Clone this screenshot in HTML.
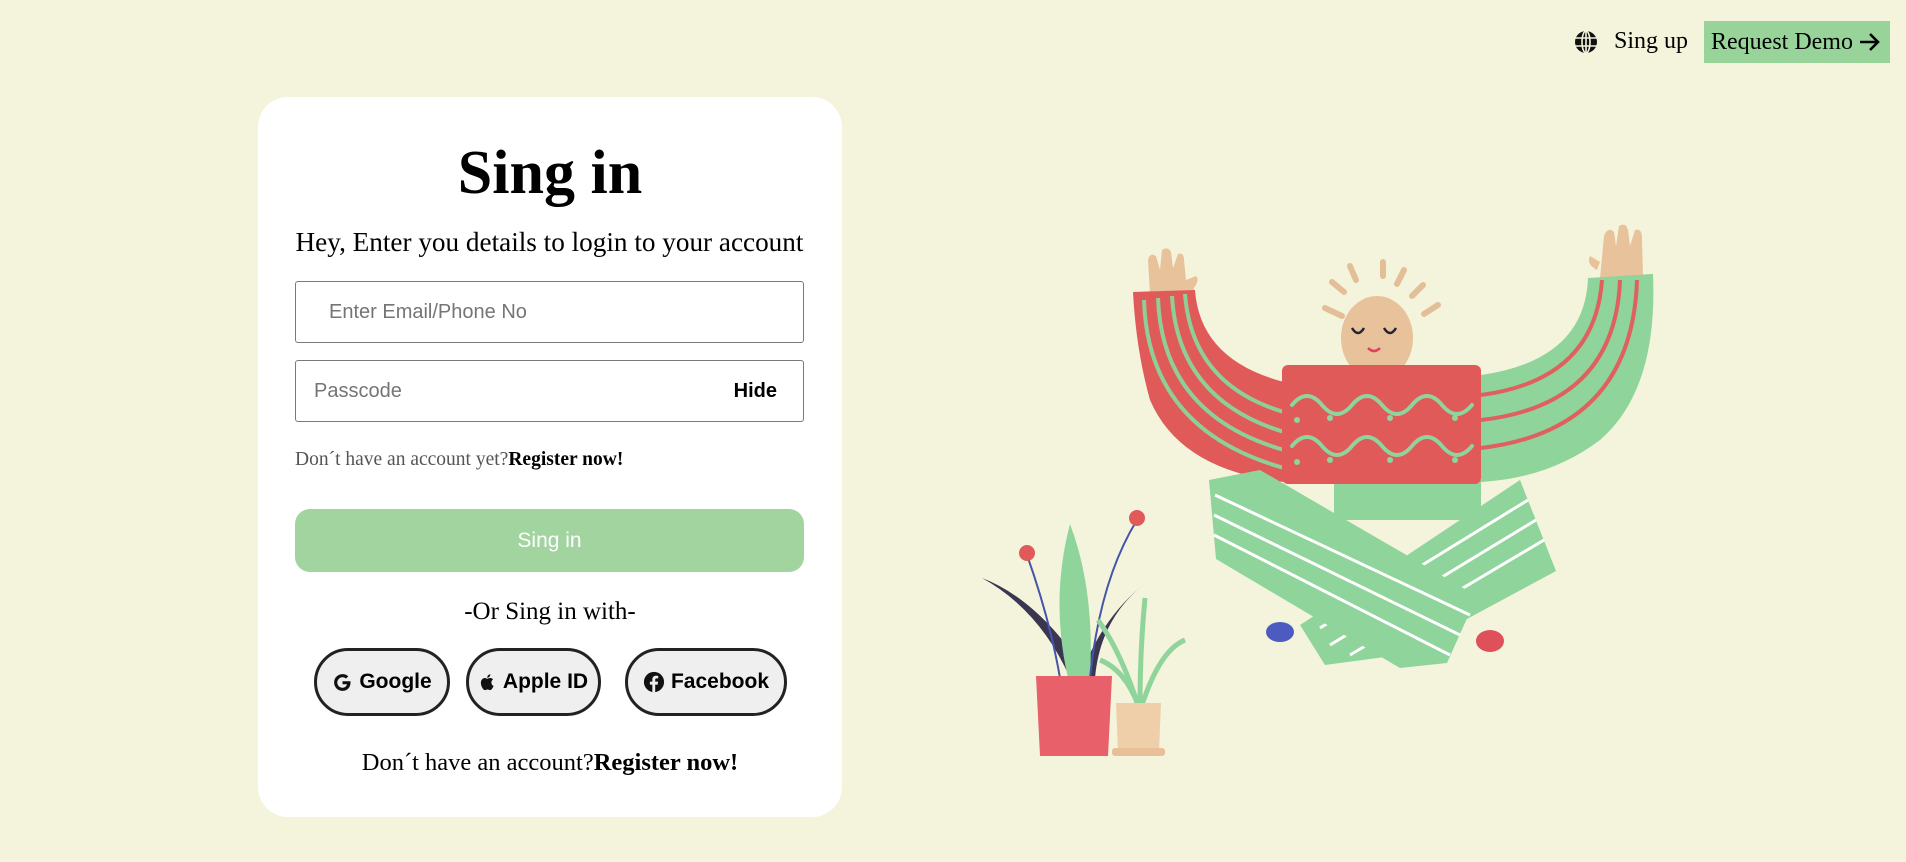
<!DOCTYPE html>
<html><head><meta charset="utf-8"><style>
*{margin:0;padding:0;box-sizing:border-box}
body{width:1906px;height:862px;background:#f4f4dc;position:relative;overflow:hidden;font-family:"Liberation Serif",serif;color:#000}
.abs{position:absolute}
.card{left:258px;top:97px;width:584px;height:720px;background:#fff;border-radius:30px}
.title{left:258px;width:584px;top:137px;text-align:center;font-size:62px;font-weight:bold;line-height:72px}
.sub{left:295px;width:509px;top:225px;text-align:center;font-size:27.2px;line-height:34px;white-space:nowrap}
.inp{left:295px;width:509px;height:62px;border:1.5px solid #7a7a7a;border-radius:3px;font-family:"Liberation Sans",sans-serif;font-size:20px;color:#757575}
.small{left:295px;top:449px;font-size:19.5px;color:#555}
.small b{color:#000}
.btn{left:295px;top:509px;width:509px;height:63px;background:#a2d4a0;border-radius:15px;color:#fff;font-family:"Liberation Sans",sans-serif;font-size:21px;text-align:center;line-height:63px}
.or{left:258px;width:584px;top:598px;text-align:center;font-size:25px}
.soc{top:648px;height:68px;border:3px solid #222;border-radius:34px;background:#efefef;font-family:"Liberation Sans",sans-serif;font-weight:bold;font-size:21px;display:flex;align-items:center;justify-content:center;gap:6px}
.bot{left:258px;width:584px;top:749px;text-align:center;font-size:24.5px}
</style></head><body>
<div class="abs card"></div>
<div class="abs title">Sing in</div>
<div class="abs sub">Hey, Enter you details to login to your account</div>
<div class="abs inp" style="top:281px;padding-left:33px;line-height:60px">Enter Email/Phone No</div>
<div class="abs inp" style="top:360px;padding-left:18px;line-height:60px">Passcode<span style="position:absolute;right:26px;color:#000;font-weight:bold">Hide</span></div>
<div class="abs small">Don´t have an account yet?<b>Register now!</b></div>
<div class="abs btn">Sing in</div>
<div class="abs or">-Or Sing in with-</div>
<div class="abs soc" style="left:314px;width:136px"><svg width="21" height="21" viewBox="0 0 24 24"><path d="M21 10.5h-9v3.5h5.1c-.6 2.5-2.7 4-5.1 4a6 6 0 1 1 4-10.5l2.6-2.6A9.6 9.6 0 0 0 12 2.4a9.6 9.6 0 1 0 0 19.2c5 0 9.2-3.6 9.2-9.6 0-.5 0-1-.2-1.5z" fill="#111"/></svg>Google</div>
<div class="abs soc" style="left:466px;width:135px"><svg width="18" height="20" viewBox="0 0 24 24"><path d="M16.5 12.6c0-2.6 2.1-3.8 2.2-3.9-1.2-1.8-3.1-2-3.7-2-1.6-.2-3.1.9-3.9.9s-2-.9-3.4-.9C6 6.8 4.3 7.8 3.4 9.4c-1.9 3.3-.5 8.1 1.3 10.8.9 1.3 2 2.8 3.3 2.7 1.3-.1 1.8-.9 3.4-.9s2 .9 3.4.8c1.4 0 2.3-1.3 3.2-2.6 1-1.5 1.4-2.9 1.4-3-.1 0-2.9-1.1-2.9-4.6zM14 4.9c.7-.9 1.2-2.1 1.1-3.3-1 0-2.3.7-3 1.6-.7.8-1.3 2-1.1 3.2 1.1.1 2.3-.6 3-1.5z" fill="#111"/></svg>Apple ID</div>
<div class="abs soc" style="left:625px;width:162px"><svg width="22" height="22" viewBox="0 0 24 24"><circle cx="12" cy="12" r="11" fill="#111"/><path d="M13.3 23v-8.2h2.7l.4-3.2h-3.1V9.6c0-.9.3-1.5 1.6-1.5h1.7V5.3c-.3 0-1.3-.1-2.4-.1-2.4 0-4 1.4-4 4.1v2.3H7.5v3.2h2.7V23z" fill="#efefef"/></svg>Facebook</div>
<div class="abs bot">Don´t have an account?<b>Register now!</b></div>

<svg class="abs" style="left:1574px;top:30px" width="24" height="24" viewBox="0 0 24 24"><circle cx="12" cy="12" r="11" fill="#111"/><g stroke="#f4f4dc" stroke-width="1.6" fill="none"><ellipse cx="12" cy="12" rx="4" ry="11"/><line x1="12" y1="1" x2="12" y2="23"/><line x1="1" y1="8" x2="23" y2="8"/><line x1="1" y1="16" x2="23" y2="16"/></g></svg>
<div class="abs" style="left:1614px;top:28px;font-size:24px">Sing up</div>
<div class="abs" style="left:1704px;top:21px;width:186px;height:42px;background:#98d49a;font-size:24px;line-height:42px;padding-left:7px;white-space:nowrap">Request Demo <svg width="22" height="20" viewBox="0 0 22 20" style="vertical-align:-3px"><path d="M1 10H19M11 2L19 10L11 18" stroke="#000" stroke-width="2.6" fill="none"/></svg></div>

<svg class="abs" style="left:0;top:0" width="1906" height="862">
<g stroke="#e3bf98" stroke-width="6" stroke-linecap="round">
<line x1="1325" y1="308" x2="1342" y2="316"/><line x1="1332" y1="282" x2="1344" y2="292"/><line x1="1350" y1="266" x2="1356" y2="280"/><line x1="1383" y1="262" x2="1383" y2="276"/><line x1="1404" y1="270" x2="1397" y2="284"/><line x1="1423" y1="285" x2="1412" y2="296"/><line x1="1438" y1="305" x2="1424" y2="314"/>
</g>
<path d="M1150 294 L1148 260 Q1150 252 1156 256 L1160 270 L1162 250 Q1168 246 1171 252 L1173 268 L1178 254 Q1184 252 1184 260 L1186 280 L1196 276 Q1200 280 1194 288 L1192 296 Z" fill="#e8c29a"/>
<path d="M1600 278 L1604 236 Q1608 226 1614 232 L1616 246 L1619 226 Q1626 222 1628 230 L1630 246 L1635 230 Q1642 228 1642 238 L1643 278 Z M1600 262 L1590 256 Q1586 264 1597 270 Z" fill="#e8c29a"/>
<path d="M1133 292 L1195 290 Q1200 360 1284 382 L1284 482 Q1180 470 1150 400 Q1136 350 1133 292 Z" fill="#e05a5a"/>
<g stroke="#8fcf96" stroke-width="4" fill="none"><path d="M1144 300 Q1148 430 1284 468"/><path d="M1158 298 Q1162 415 1284 450"/><path d="M1172 296 Q1178 400 1284 432"/><path d="M1185 294 Q1192 385 1284 412"/></g>
<path d="M1481 375 Q1585 360 1588 278 L1653 274 Q1658 390 1600 440 Q1550 478 1481 482 Z" fill="#8fd49b"/>
<g stroke="#e06060" stroke-width="4" fill="none"><path d="M1481 395 Q1595 380 1602 280"/><path d="M1481 420 Q1615 405 1620 280"/><path d="M1481 448 Q1632 430 1637 280"/></g>
<ellipse cx="1377" cy="338" rx="36" ry="42" fill="#e8c29a"/>
<path d="M1352 328 q6 10 12 0 M1384 328 q6 10 12 0" stroke="#223" stroke-width="2.5" fill="none"/>
<path d="M1368 348 q6 6 12 0" stroke="#e0405a" stroke-width="2.5" fill="none"/>
<rect x="1334" y="480" width="147" height="40" fill="#8fd49b"/>
<path d="M1520 480 L1556 571 L1400 655 L1325 665 L1300 625 L1400 560 Z" fill="#8fd49b"/>
<g stroke="#fff" stroke-width="3"><line x1="1528" y1="500" x2="1320" y2="628"/><line x1="1536" y1="520" x2="1330" y2="645"/><line x1="1544" y1="540" x2="1350" y2="655"/></g>
<path d="M1209 480 L1260 470 L1477 596 L1447 663 L1400 668 L1216 559 Z" fill="#8fd49b"/>
<g stroke="#fff" stroke-width="3"><line x1="1215" y1="495" x2="1470" y2="615"/><line x1="1214" y1="515" x2="1460" y2="635"/><line x1="1214" y1="535" x2="1450" y2="655"/></g>
<rect x="1282" y="365" width="199" height="119" rx="6" fill="#e05a5a"/>
<g stroke="#8fd49b" stroke-width="4" fill="none" stroke-linecap="round"><path d="M1292 405 q15 -18 30 0 t30 0 t30 0 t30 0 t30 0 t30 0"/><path d="M1292 446 q15 -18 30 0 t30 0 t30 0 t30 0 t30 0 t30 0"/></g>
<g fill="#8fd49b"><circle cx="1297" cy="420" r="3"/><circle cx="1330" cy="418" r="3"/><circle cx="1390" cy="418" r="3"/><circle cx="1455" cy="418" r="3"/><circle cx="1297" cy="462" r="3"/><circle cx="1330" cy="460" r="3"/><circle cx="1390" cy="460" r="3"/><circle cx="1455" cy="460" r="3"/></g>
<ellipse cx="1280" cy="632" rx="14" ry="10" fill="#4c5bbf"/>
<ellipse cx="1490" cy="641" rx="14" ry="11" fill="#e0505a"/>
<path d="M982 578 Q1040 610 1070 678 L1090 678 Q1040 600 982 578 Z" fill="#3a3550"/>
<path d="M1143 585 Q1100 620 1095 678 L1080 678 Q1100 620 1143 585 Z" fill="#3a3550"/>
<path d="M1070 524 Q1050 600 1068 678 L1090 678 Q1095 590 1070 524 Z" fill="#8fd49b"/>
<path d="M1027 555 Q1050 620 1060 678" stroke="#4455aa" stroke-width="2" fill="none"/>
<path d="M1137 520 Q1100 580 1090 678" stroke="#4455aa" stroke-width="2" fill="none"/>
<circle cx="1027" cy="553" r="8" fill="#e05a5a"/><circle cx="1137" cy="518" r="8" fill="#e05a5a"/>
<path d="M1036 676 L1112 676 L1108 756 L1040 756 Z" fill="#e8606a"/>
<g stroke="#8fd49b" stroke-width="5" fill="none"><path d="M1138 705 Q1120 650 1098 620"/><path d="M1140 705 Q1140 650 1145 598"/><path d="M1142 705 Q1160 650 1185 640"/><path d="M1138 705 Q1125 670 1100 660"/></g>
<path d="M1116 703 L1161 703 L1159 752 L1118 752 Z" fill="#efcfaa"/>
<rect x="1112" y="748" width="53" height="8" rx="3" fill="#e8bf98"/>
</svg>
</body></html>
